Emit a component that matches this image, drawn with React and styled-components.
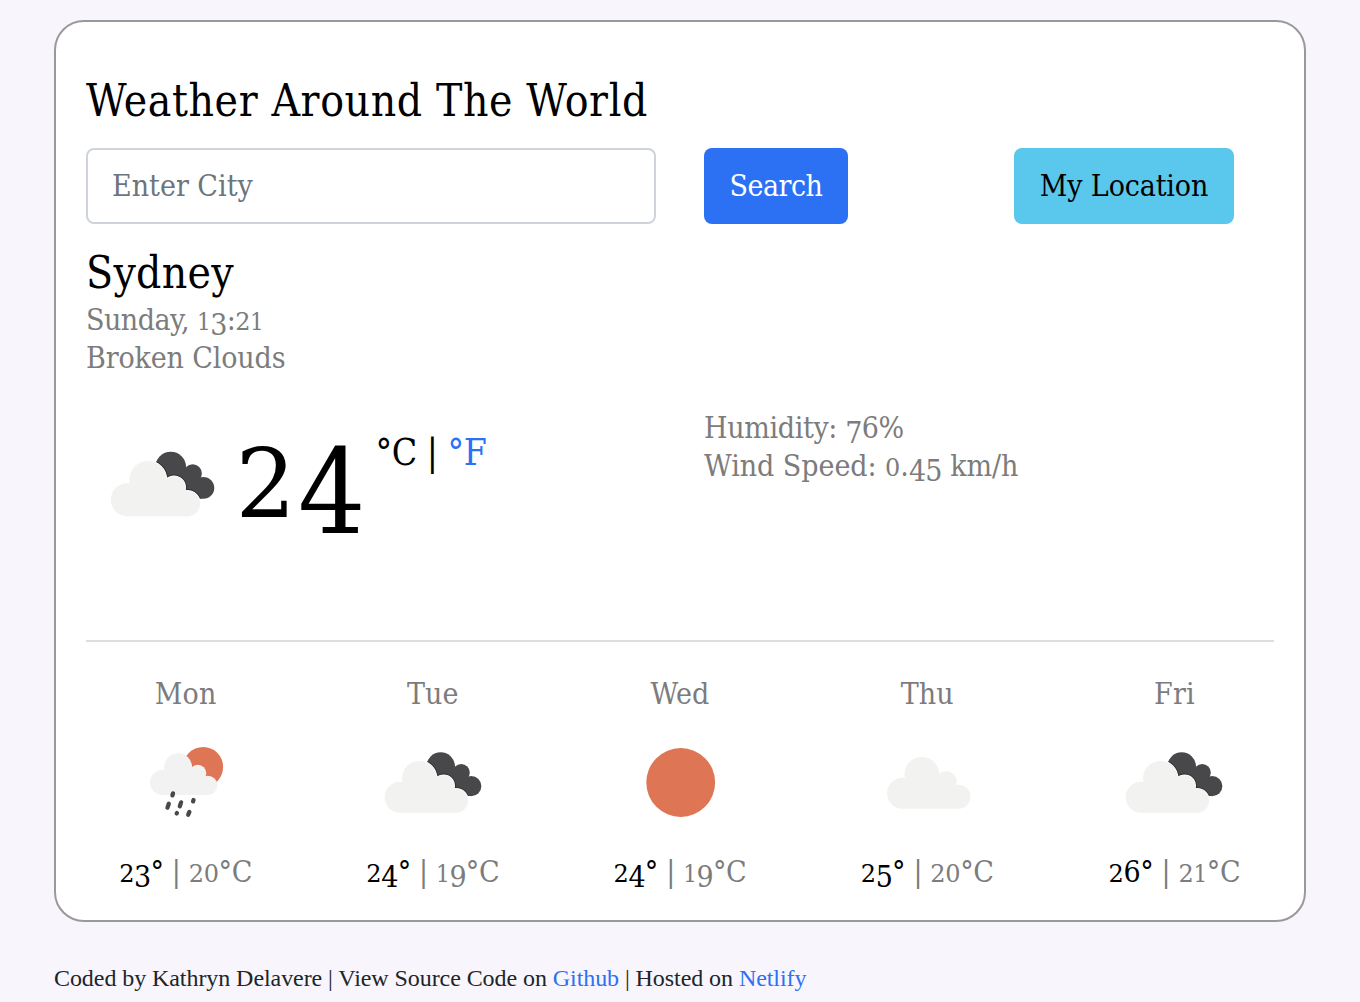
import React, { useId } from 'react';
import styled, { createGlobalStyle } from 'styled-components';

const slab = '"DejaVu Serif Condensed", "DejaVu Serif", serif';

const GlobalStyle = createGlobalStyle`
  *, *::before, *::after { box-sizing: border-box; }
  body {
    margin: 0;
    background: #f8f6fc;
    font-family: ${slab};
    font-size: 30px;
    line-height: 38px;
    color: #000;
  }
`;

const Page = styled.div`
  padding: 20px 54px 0;
`;

const Card = styled.main`
  height: 902px;
  padding: 52px 30px 0;
  border: 2px solid #999;
  border-radius: 30px;
  background: #fff;
`;

const Title = styled.h1`
  margin: 0 0 20px;
  font-size: 44px;
  font-weight: 400;
  line-height: 54px;
  letter-spacing: 0.62px;
`;

const SearchForm = styled.form`
  display: grid;
  grid-template-columns: 570px 262px 1fr;
  column-gap: 48px;
  justify-items: start;
`;

const CityInput = styled.input`
  width: 100%;
  height: 76px;
  padding: 11px 24px 13px;
  border: 2px solid #ced4da;
  border-radius: 8px;
  background: #fff;
  font: 30px/48px ${slab};
  color: #212529;
  outline: none;

  &::placeholder {
    color: #6c757d;
    opacity: 1;
  }
`;

const Button = styled.button`
  width: ${(p) => p.$width}px;
  height: 76px;
  padding: 0;
  border: 0;
  border-radius: 8px;
  background: ${(p) => (p.$primary ? '#2c70f4' : '#5ac7ec')};
  color: ${(p) => (p.$primary ? '#fff' : '#000')};
  font: 30px/48px ${slab};
  letter-spacing: ${(p) => (p.$primary ? '-0.5px' : '-0.15px')};
  white-space: nowrap;
`;

const City = styled.h2`
  margin: 22px 0 0;
  font-size: 44px;
  font-weight: 400;
  line-height: 54px;
  letter-spacing: 0.3px;
`;

const DetailList = styled.ul`
  margin: 1px 0 0;
  padding: 0;
  list-style: none;
  color: #7c7c7c;
`;

const Detail = styled.li`
  height: 38px;
  letter-spacing: ${(p) => p.$tracking || 0}px;
  white-space: nowrap;
`;

const Current = styled.section`
  display: grid;
  grid-template-columns: 570px 1fr;
  column-gap: 48px;
  height: 232px;
  margin-top: 31px;
`;

const Reading = styled.div`
  display: flex;
  align-items: flex-start;
  padding-left: 22.6px;
`;

const WeatherIcon = styled.svg`
  display: block;
  flex: none;
  width: ${(p) => p.$size}px;
  height: ${(p) => p.$size}px;
  overflow: visible;
`;

const CurrentIcon = styled.div`
  padding-top: 21.5px;
`;

const Temperature = styled.strong`
  margin: 16px 0 0 20px;
  font-size: 95px;
  font-weight: 400;
  line-height: 120px;
  white-space: nowrap;
`;

const HighDigit = styled.span`
  font-family: "DejaVu Serif", serif;
`;

const DeepDigit = styled.span`
  margin-left: 2px;
  font-size: 118px;
  line-height: 0;
  vertical-align: -16px;
`;

const Units = styled.span`
  margin: 22px 0 0 10px;
  font-size: 37px;
  line-height: 46px;
  letter-spacing: -0.5px;
  white-space: nowrap;
`;

const Link = styled.a`
  color: #2c70f4;
  text-decoration: none;
`;

const Divider = styled.hr`
  height: 2px;
  margin: 0 0 33px;
  border: 0;
  background: #ddd;
`;

const Forecast = styled.section`
  display: grid;
  grid-template-columns: repeat(5, 1fr);
  margin: 0 -24px;
`;

const Day = styled.article`
  display: flex;
  flex-direction: column;
  align-items: center;
  color: #7c7c7c;
`;

const DayName = styled.div`
  margin-bottom: 19.3px;
  letter-spacing: 0.1px;
`;

const Temps = styled.div`
  height: 38px;
  margin-top: 20.7px;
  letter-spacing: -0.35px;
  white-space: nowrap;
`;

const High = styled.span`
  color: #000;
`;

const ShortFigure = styled.span`
  font-family: ${(p) => (p.$narrow ? slab : '"DejaVu Serif", serif')};
  font-size: 24px;
  line-height: 0;
`;

const LowFigure = styled.span`
  font-size: 30px;
  line-height: 0;
  letter-spacing: -0.8px;
  vertical-align: -5px;
`;

const Footer = styled.footer`
  margin-top: 38px;
  color: #212529;
  font-family: "Liberation Serif", serif;
  font-size: 24px;
  line-height: 36px;
  letter-spacing: -0.07px;
  white-space: nowrap;
`;

/* Old-style figures: 0-2 sit at x-height, 3-5, 7 and 9 drop below the baseline. */
function Figures({ children }) {
  return children
    .split(/([02]+|1|[34579]+)/)
    .filter(Boolean)
    .map((part, i) => {
      if (/^[012]/.test(part)) {
        return <ShortFigure key={i} $narrow={part === '1'}>{part}</ShortFigure>;
      }
      if (/^[34579]/.test(part)) return <LowFigure key={i}>{part}</LowFigure>;
      return part;
    });
}

const CloudShape = () => (
  <>
    <circle cx="16.8" cy="65.2" r="15.5" />
    <circle cx="36" cy="46.3" r="17.3" />
    <circle cx="60.3" cy="53.8" r="10.6" />
    <circle cx="72.7" cy="68.8" r="12" />
    <path d="M16.8 80.7V55L36 46L60 53L72.7 68V80.7Z" />
  </>
);

const DarkCloudShape = () => (
  <>
    <circle cx="57.3" cy="34.6" r="14.3" />
    <circle cx="77.8" cy="40.6" r="8.6" />
    <circle cx="87.8" cy="54.1" r="10.2" />
    <path d="M57 34L78 40L88 54L87 64L72 64L50 48Z" />
  </>
);

function Icon({ kind, size = 100 }) {
  const clip = useId();
  return (
    <WeatherIcon $size={size} viewBox="0 0 100 100" aria-hidden="true">
      {kind === 'sun' && <circle cx="50.7" cy="50.5" r="34.4" fill="#de7554" />}
      {kind === 'cloud' && (
        <g transform="translate(8.8 -4)" fill="#f2f2f1"><CloudShape /></g>
      )}
      {kind === 'clouds' && (
        <g transform="translate(.4 0)">
          <clipPath id={clip}><DarkCloudShape /></clipPath>
          <g fill="#48484a"><DarkCloudShape /></g>
          <g clipPath={`url(#${clip})`} fill="#2f2f31" stroke="#2f2f31" strokeWidth="3.2"><CloudShape /></g>
          <g fill="#fff" stroke="#fff" strokeWidth="1.4"><CloudShape /></g>
          <g fill="#f2f2f1"><CloudShape /></g>
        </g>
      )}
      {kind === 'rain' && (
        <g transform="translate(.4 0)">
          <circle cx="66.7" cy="35" r="20" fill="#de7554" />
          <g transform="translate(12.6 -2.2) scale(.808)" fill="#f2f2f3"><CloudShape /></g>
          <g stroke="#48484a" strokeWidth="4.3" strokeLinecap="round">
            <path d="M36 63.4L36.6 61.4M31.1 75.6L32.4 71.8M43.4 74.2L44.7 70.4M56.7 69.4L57.1 68M40.3 81.4L40.5 81.1M51.8 82.7L53 79.9" />
          </g>
        </g>
      )}
    </WeatherIcon>
  );
}

const days = [
  { name: 'Mon', icon: 'rain', high: '23°', low: '20°C' },
  { name: 'Tue', icon: 'clouds', high: '24°', low: '19°C' },
  { name: 'Wed', icon: 'sun', high: '24°', low: '19°C' },
  { name: 'Thu', icon: 'cloud', high: '25°', low: '20°C' },
  { name: 'Fri', icon: 'clouds', high: '26°', low: '21°C' },
];

export default function App() {
  return (
    <Page>
      <GlobalStyle />
      <Card>
        <Title>Weather Around The World</Title>
        <SearchForm onSubmit={(e) => e.preventDefault()}>
          <CityInput type="text" placeholder="Enter City" />
          <Button type="submit" $primary $width={144}>Search</Button>
          <Button type="button" $width={220}>My Location</Button>
        </SearchForm>
        <City>Sydney</City>
        <DetailList>
          <Detail $tracking={-0.5}>Sunday, <Figures>13:21</Figures></Detail>
          <Detail $tracking={-0.15}>Broken Clouds</Detail>
        </DetailList>
        <Current>
          <Reading>
            <CurrentIcon><Icon kind="clouds" size={107} /></CurrentIcon>
            <Temperature><HighDigit>2</HighDigit><DeepDigit>4</DeepDigit></Temperature>
            <Units>°C | <Link>°F</Link></Units>
          </Reading>
          <DetailList>
            <Detail $tracking={-0.35}>Humidity: <Figures>76%</Figures></Detail>
            <Detail $tracking={-0.05}>Wind Speed: <Figures>0.45</Figures> km/h</Detail>
          </DetailList>
        </Current>
        <Divider />
        <Forecast>
          {days.map((d) => (
            <Day key={d.name}>
              <DayName>{d.name}</DayName>
              <Icon kind={d.icon} />
              <Temps>
                <High><Figures>{d.high}</Figures></High> | <Figures>{d.low}</Figures>
              </Temps>
            </Day>
          ))}
        </Forecast>
      </Card>
      <Footer>
        Coded by Kathryn Delavere | View Source Code on <Link>Github</Link> | Hosted on <Link>Netlify</Link>
      </Footer>
    </Page>
  );
}
